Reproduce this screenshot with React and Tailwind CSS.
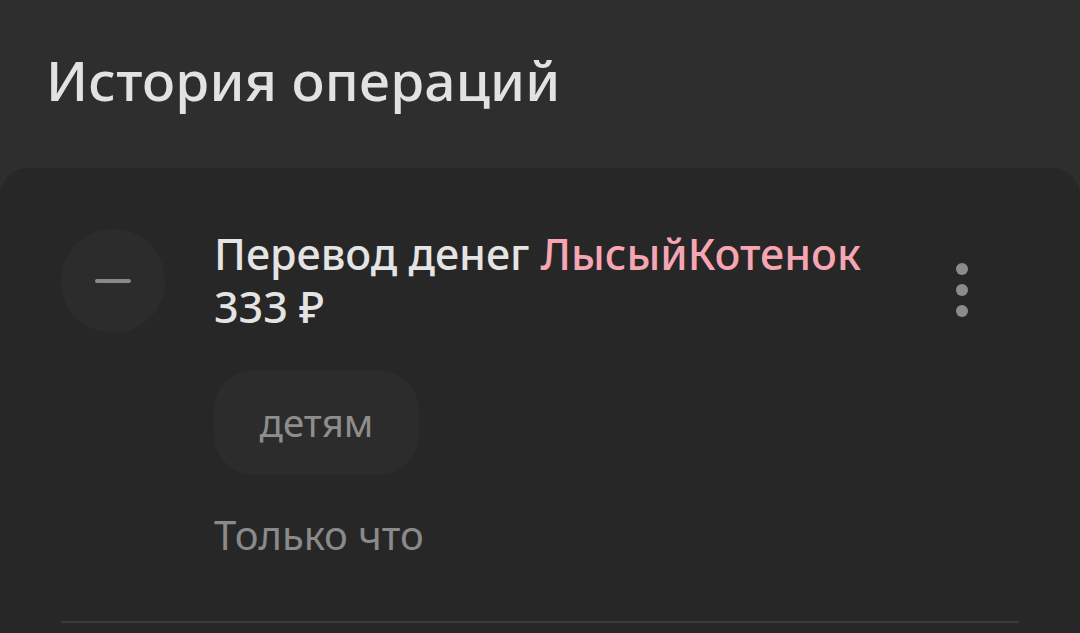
import React from 'react';

export default function App() {
    return (
        <div className="h-[633px] w-[1080px] overflow-hidden bg-[#2e2e2e]" style={{ fontFamily: '"Noto Sans", "Open Sans", sans-serif' }}>
            {/* Header */}
            <h1 className="pl-[46px] pt-[44px] text-[55px] leading-[72px] font-medium text-[#e2e2e2] tracking-[0.2px]">
                История операций
            </h1>

            {/* Operation card */}
            <div className="mt-[52px] rounded-t-[28px] bg-[#272727] h-[500px] pt-[59px]">
                <div className="flex items-start">
                    {/* Icon */}
                    <div className="ml-[61px] mt-[2px] w-[104px] h-[104px] rounded-full bg-[#2c2c2c] flex items-center justify-center">
                        <span className="block w-[36px] h-[4px] rounded-full bg-[#8a8a8a]" />
                    </div>

                    {/* Content */}
                    <div className="ml-[49px] flex-1">
                        <p className="text-[43px] leading-[53px] font-medium text-[#e4e4e4]">
                            Перевод денег <span className="text-[#f6a6b2]">ЛысыйКотенок</span>
                        </p>
                        <p className="text-[43px] leading-[53px] font-medium text-[#e4e4e4]">333 ₽</p>

                        <div className="mt-[37px] inline-flex items-center justify-center w-[205px] h-[105px] rounded-[40px] bg-[#2c2c2c] text-[38.5px] text-[#8e8e8e]">
                            детям
                        </div>

                        <p className="mt-[37px] text-[40px] leading-[46px] text-[#8a8a8a]">Только что</p>
                    </div>

                    {/* Menu dots */}
                    <div className="mr-[112px] mt-[36px] flex flex-col gap-[9px]">
                        <span className="block w-[12px] h-[12px] rounded-full bg-[#8c8c8c]" />
                        <span className="block w-[12px] h-[12px] rounded-full bg-[#8c8c8c]" />
                        <span className="block w-[12px] h-[12px] rounded-full bg-[#8c8c8c]" />
                    </div>
                </div>

                <div className="mx-[61px] mt-[63px] h-[2px] bg-[#3a3a3a]" />
            </div>
        </div>
    );
}
